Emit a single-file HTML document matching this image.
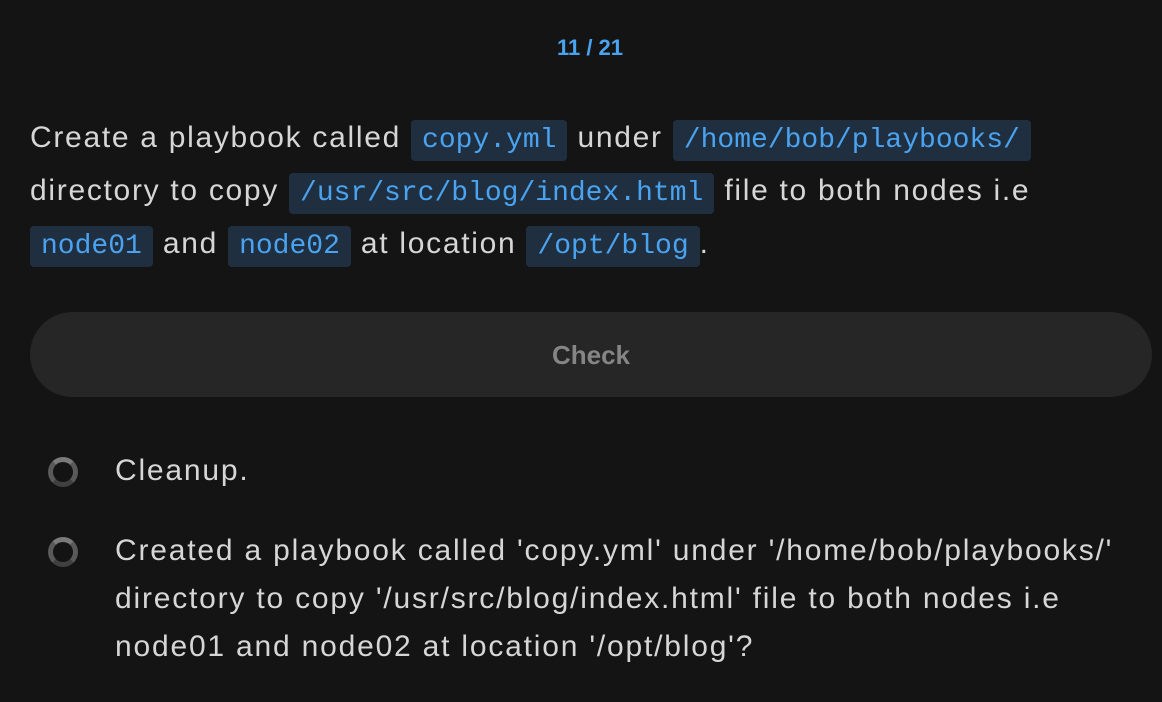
<!DOCTYPE html>
<html><head><style>
body{margin:0;background:#141414;width:1162px;height:702px;overflow:hidden;font-family:"Liberation Sans",sans-serif;color:#d6d6d6}
.top{position:absolute;top:35px;left:0;width:1180px;text-align:center;color:#4aa3f0;font-weight:bold;font-size:22px}
.q{position:absolute;top:113px;left:30px;width:1130px;font-size:30px;line-height:50px;letter-spacing:1.7px;white-space:nowrap}
code{font-family:"Liberation Mono",monospace;font-size:28px;letter-spacing:0;color:#4aa3f0;background:#1f2f40;border-radius:4px;padding:5px 11px}
.btn{position:absolute;left:30px;top:312px;width:1122px;height:85px;border-radius:43px;background:#262626;color:#858585;font-weight:bold;font-size:26px;text-align:center;line-height:86px}
.item{position:absolute;left:115px;font-size:30px;line-height:48px;width:1060px;letter-spacing:1.8px;white-space:nowrap}
.c{position:absolute;left:48px;width:20px;height:20px;border-radius:50%;border:5px solid #5a5a5a;border-top-color:#7a7a7a;border-bottom-color:#404040}
</style></head><body>
<div class="top">11 / 21</div>
<div class="q">Create a playbook called <code>copy.yml</code> under <code>/home/bob/playbooks/</code><br>directory to copy <code>/usr/src/blog/index.html</code> file to both nodes i.e<br><code>node01</code> and <code>node02</code> at location <code>/opt/blog</code>.</div>
<div class="btn">Check</div>
<div class="c" style="top:457px"></div>
<div class="item" style="top:447px">Cleanup.</div>
<div class="c" style="top:537px"></div>
<div class="item" style="top:527px">Created a playbook called 'copy.yml' under '/home/bob/playbooks/'<br>directory to copy '/usr/src/blog/index.html' file to both nodes i.e<br>node01 and node02 at location '/opt/blog'?</div>
</body></html>
